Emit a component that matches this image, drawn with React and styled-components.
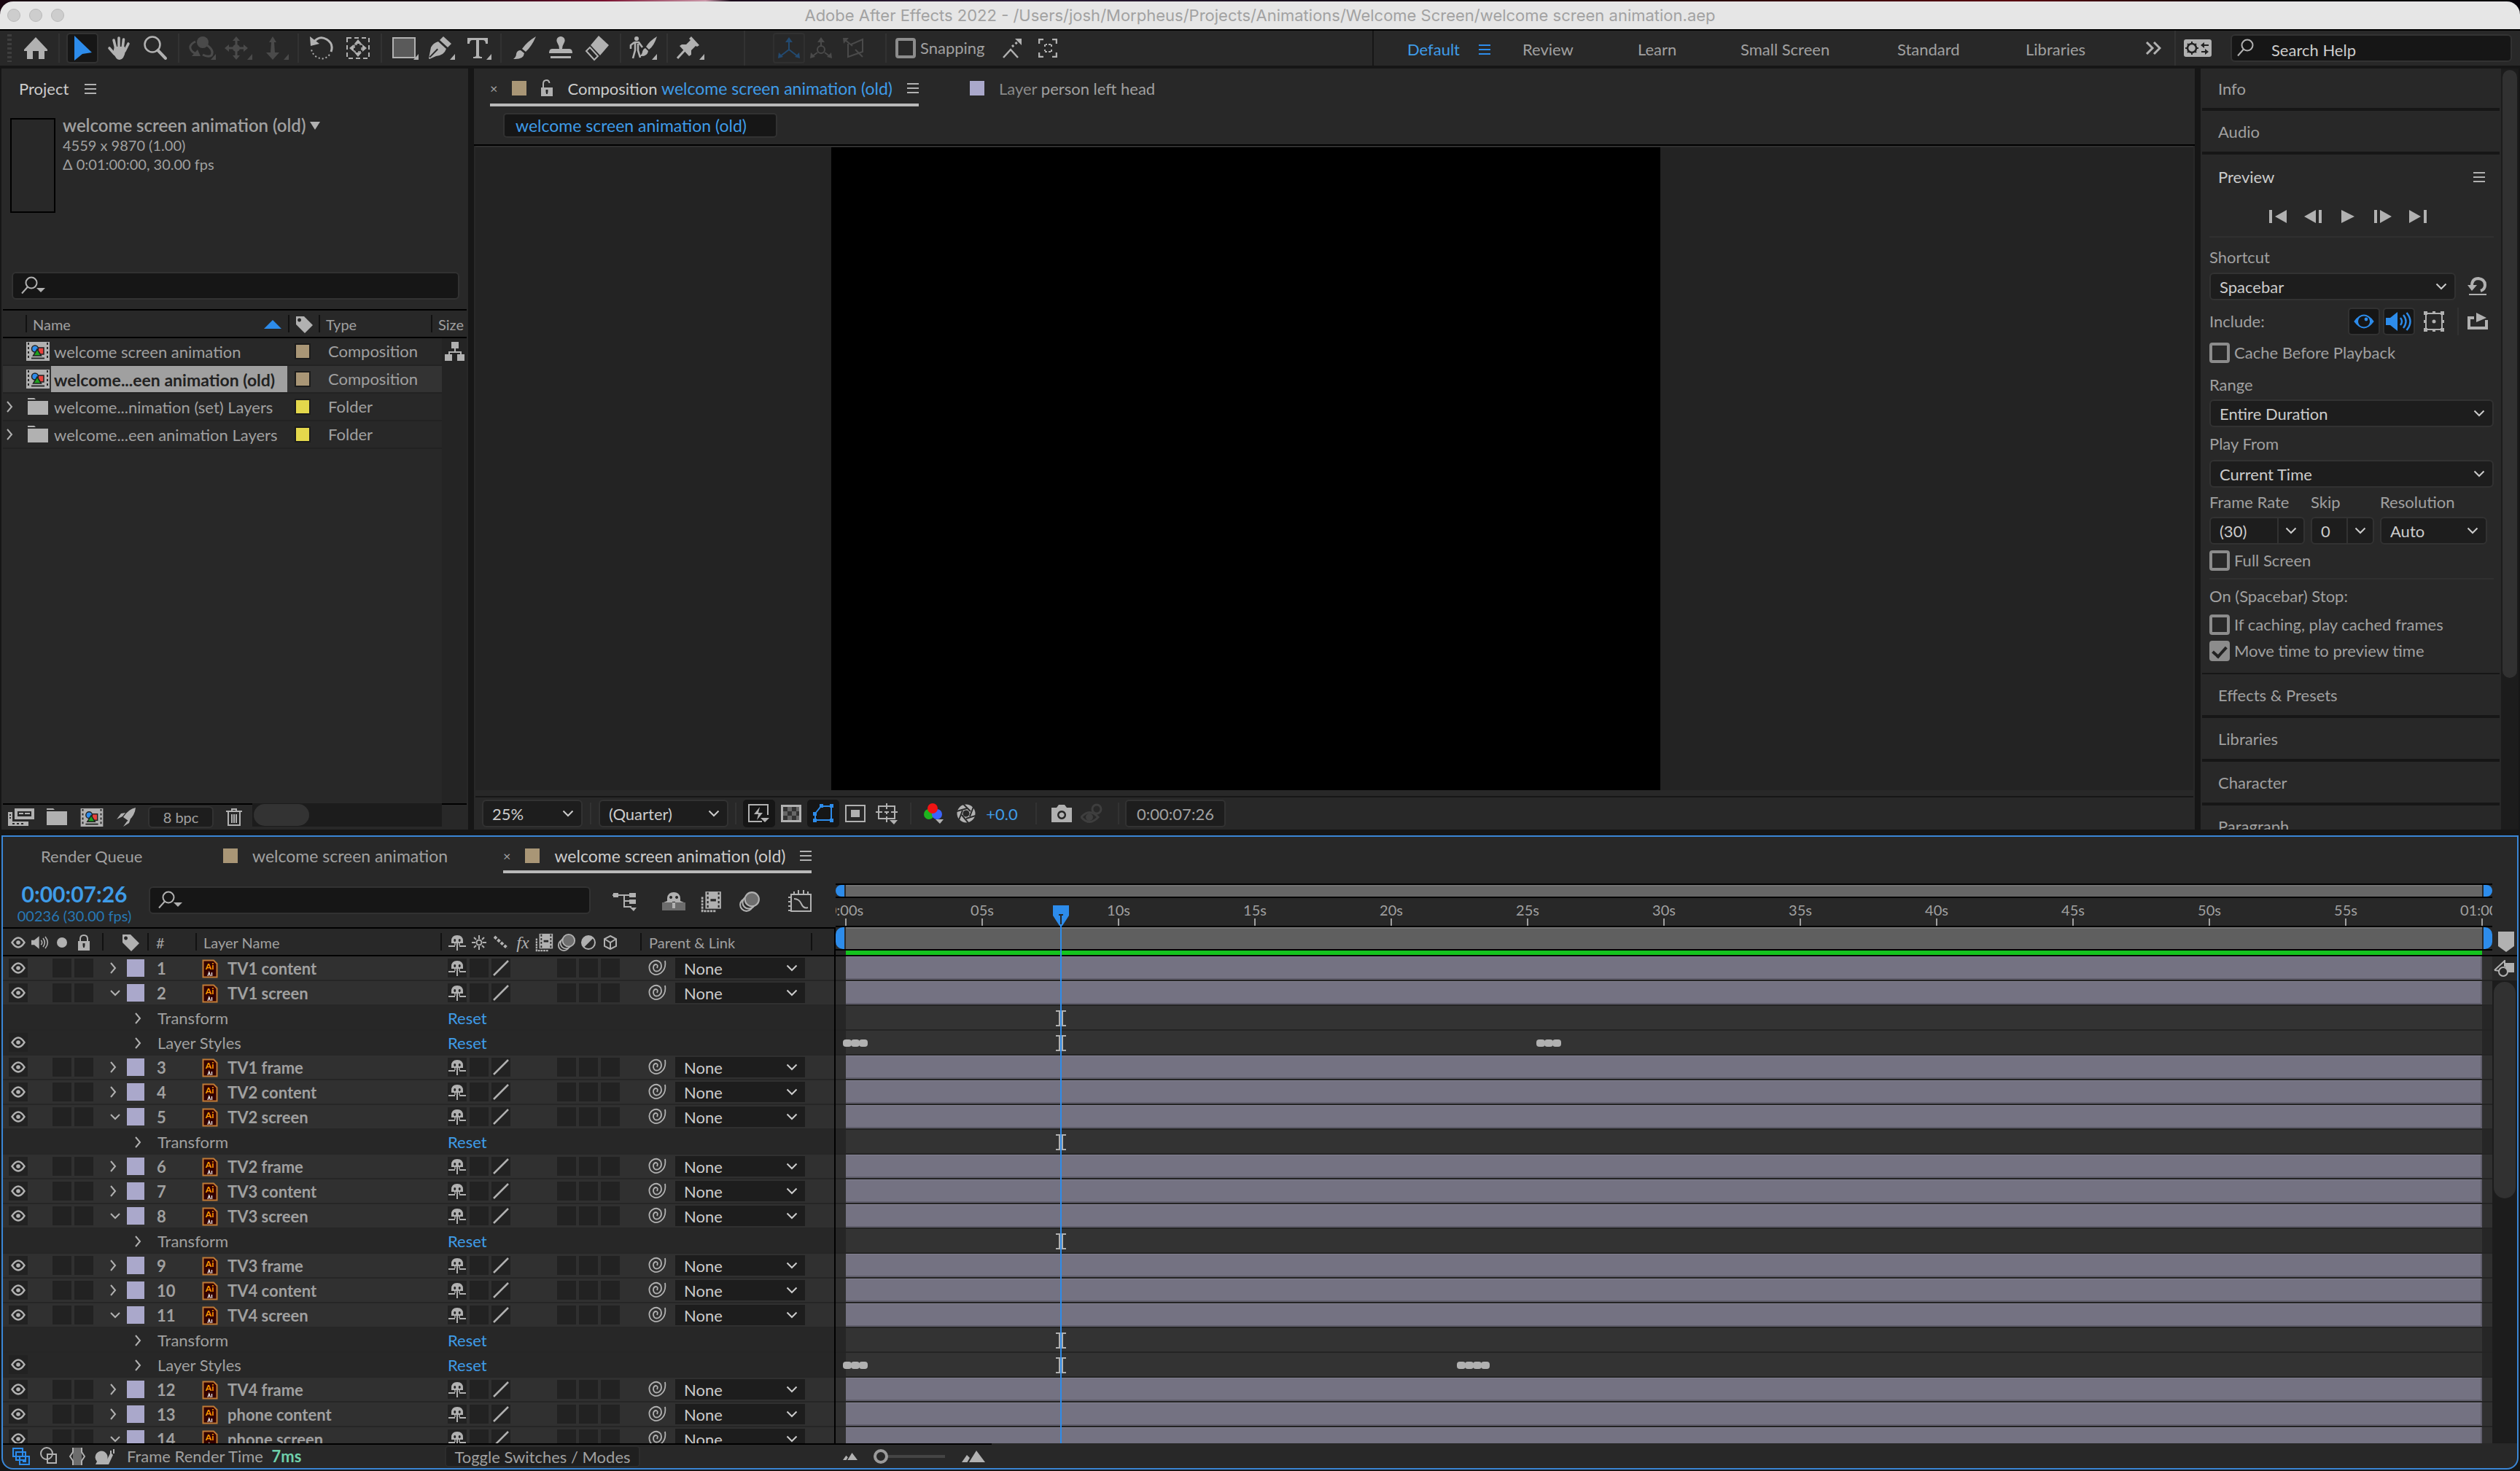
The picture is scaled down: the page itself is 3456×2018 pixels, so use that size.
import React from "react";
import styled, { createGlobalStyle, css } from "styled-components";

const color = {
  gap: "#161616",
  panel: "#282828",
  well: "#161616",
  field: "#1d1d1d",
  edge: "#323232",
  icon: "#b1b1b1",
  text: "#a0a0a0",
  bright: "#cccccc",
  blue: "#2d8ceb",
  link: "#3f9ce8",
  tan: "#a99676",
  lavender: "#aaa8cb",
  yellow: "#e4d84c",
};

const GlobalStyle = createGlobalStyle`
  * { box-sizing: border-box; }
  html, body { margin: 0; background: #000; }
  body, button, input, select { font-family: Lato, "Open Sans", sans-serif; font-size: 22px; color: ${color.text}; }
  button { border: 0; padding: 0; margin: 0; background: none; cursor: pointer; }
  svg { display: block; flex: none; }
`;

/* ---------- shared parts ---------- */

const Page = styled.div`
  height: 100vh;
  display: flex;
  flex-direction: column;
  overflow: hidden;
  background: ${color.gap};
  line-height: 28px;
  white-space: nowrap;
`;

const Burger = styled.span`
  display: block;
  flex: none;
  width: 16px;
  height: 14px;
  border-top: 2px solid ${(p) => p.$color || color.icon};
  border-bottom: 2px solid ${(p) => p.$color || color.icon};
  background: linear-gradient(${(p) => p.$color || color.icon}, ${(p) => p.$color || color.icon}) center / 100% 2px no-repeat;
`;

const Swatch = styled.span`
  display: block;
  flex: none;
  width: ${(p) => p.$size || 20}px;
  height: ${(p) => p.$size || 20}px;
  background: ${(p) => p.$color};
  outline: ${(p) => (p.$ring ? "2px solid #1c1c1c" : "none")};
`;

const SearchBox = styled.label`
  display: flex;
  align-items: center;
  height: 38px;
  padding: 0 10px;
  gap: 14px;
  background: ${color.well};
  border: 2px solid ${color.edge};
  border-radius: 6px;
`;

const SearchInput = styled.input`
  flex: 1;
  min-width: 0;
  height: 34px;
  padding: 4px 0 0;
  border: 0;
  outline: 0;
  background: none;
  color: ${color.bright};
  &::placeholder { color: ${color.bright}; opacity: 1; }
`;

const SelectWrap = styled.span`
  display: grid;
  grid-template-columns: minmax(0, 1fr) 36px;
  align-items: center;
  width: ${(p) => p.$width || "100%"};
  height: ${(p) => p.$height || 38}px;
  background: ${color.field};
  border: ${(p) => (p.$flat ? "0" : `2px solid ${color.edge}`)};
  border-radius: ${(p) => (p.$flat ? 0 : 6)}px;
  overflow: hidden;
`;

const NativeSelect = styled.select`
  grid-area: 1 / 1 / 2 / 3;
  appearance: none;
  width: 100%;
  height: 100%;
  padding: 1px 0 0 12px;
  border: 0;
  outline: 0;
  background: none;
  color: ${color.bright};
`;

const SelectArrow = styled.span`
  grid-area: 1 / 2 / 2 / 3;
  display: flex;
  align-items: center;
  justify-content: center;
  height: 100%;
  pointer-events: none;
  border-left: ${(p) => (p.$split ? `2px solid ${color.edge}` : "0")};
`;

const Check = styled.input`
  appearance: none;
  flex: none;
  display: grid;
  place-items: center;
  width: 28px;
  height: 28px;
  margin: 0;
  border: 4px solid #8c8c8c;
  border-radius: 4px;
  &:checked { background: #8c8c8c; }
  &:checked::after {
    content: "";
    width: 8px;
    height: 15px;
    margin-bottom: 4px;
    border: solid #222;
    border-width: 0 4px 4px 0;
    transform: rotate(42deg);
  }
`;

const CheckLabel = styled.label`
  display: flex;
  align-items: center;
  gap: 6px;
`;

const Chevron = ({ size = 16, stroke = color.icon }) => (
  <svg width={size} height="10" viewBox="0 0 16 10">
    <path d="M1.5 1.5 L8 8 L14.5 1.5" fill="none" stroke={stroke} strokeWidth="2" />
  </svg>
);

const Twirl = ({ open }) => (
  <svg width="18" height="18" viewBox="0 0 18 18">
    <path d={open ? "M4 6 L10 12 L16 6" : "M4 2 L10 9 L4 16"} fill="none" stroke={color.icon} strokeWidth="2" />
  </svg>
);

const Dropdown = ({ label, value, width, height, split, flat }) => (
  <SelectWrap $width={width} $height={height} $flat={flat}>
    <NativeSelect aria-label={label} defaultValue={value}>
      <option>{value}</option>
    </NativeSelect>
    <SelectArrow $split={split}>
      <Chevron stroke={color.bright} />
    </SelectArrow>
  </SelectWrap>
);

const FindIcon = ({ menu }) => (
  <svg width="36" height="26" viewBox="0 0 36 26">
    <g fill="none" stroke={color.icon} strokeWidth="2">
      <circle cx="15" cy="9" r="7.5" />
      <path d="M10 14.5 L2 23.5" />
    </g>
    {menu && <path d="M22 16 h12 l-6 6z" fill={color.icon} />}
  </svg>
);

/* ---------- icon drawings ---------- */

const Draw = ({ w = 32, h = 32, c = color.icon, children }) => (
  <svg width={w} height={h} viewBox={`0 0 ${w} ${h}`} fill={c} stroke="none">
    {children}
  </svg>
);

const stroked = (c = color.icon, width = 2) => ({ fill: "none", stroke: c, strokeWidth: width });

const TagIcon = () => (
  <Draw w={24} h={24}>
    <path fillRule="evenodd" d="M1 1 h11 L24 13 L13 24 L1 12z M5.5 3.5 a2.5 2.5 0 1 0 .1 0z" />
  </Draw>
);

const CompIcon = ({ w = 32, h = 26 }) => (
  <svg width={w} height={h} viewBox="0 0 32 26">
    <rect width="32" height="26" fill={color.icon} />
    <path d="M3 1v24M29 1v24" stroke="#2a2a2a" strokeWidth="2" strokeDasharray="3 3" />
    <path d="M7 22.5h18" stroke="#2a2a2a" strokeWidth="2" />
    <rect x="14" y="8" width="10" height="9" fill="#e8423c" stroke="#222" strokeWidth="1.5" />
    <circle cx="12" cy="9.5" r="4.5" fill="#2d8ceb" stroke="#222" strokeWidth="1.5" />
    <path d="M15 10 L20.5 19 H9.5z" fill="#1ea01e" stroke="#222" strokeWidth="1.5" />
  </svg>
);

const FolderIcon = () => (
  <Draw w={28} h={24}>
    <path d="M0 0h9l2 2H0z M0 4h28v19H0z" />
  </Draw>
);

const EyeIcon = ({ w = 20, h = 16 }) => (
  <svg width={w} height={h} viewBox="0 0 20 16">
    <path d="M1.5 8 Q10 -5 18.5 8 Q10 21 1.5 8z" fill="none" stroke={color.icon} strokeWidth="2.4" />
    <circle cx="10" cy="8" r="2.8" fill={color.icon} />
  </svg>
);

const PreviewEyeIcon = () => (
  <svg width="28" height="20" viewBox="0 0 28 20">
    <path d="M1.5 10 Q14 -7 26.5 10 Q14 27 1.500 10z" fill="none" stroke={color.blue} strokeWidth="2" />
    <path
      fillRule="evenodd"
      fill={color.blue}
      d="M2 10 Q14 -6 26 10 Q14 26 2 10z M14 2 a8 8 0 1 0 .1 0z"
    />
    <circle cx="17" cy="7" r="2.4" fill={color.blue} />
  </svg>
);

const SpeakerIcon = ({ w = 24, h = 22, c = color.icon }) => (
  <svg width={w} height={h} viewBox="0 0 36 26">
    <path d="M0 8 h6 L16 0 v26 L6 18 H0z" fill={c} />
    <path d="M20 8 q4 5 0 10 M24 4 q7 9 0 18 M28.5 1 q10 12 0 24" fill="none" stroke={c} strokeWidth="2.4" />
  </svg>
);

const LockIcon = () => (
  <Draw w={20} h={24}>
    <path d="M5 11 V7 q0-5 5-5 t5 5 v4" {...stroked()} />
    <path fillRule="evenodd" d="M2 10h16v13H2z M8.5 13v3l.7 3h1.6l.7-3v-3z" />
  </Draw>
);

const OpenLockIcon = () => (
  <Draw w={16} h={24}>
    <path d="M3 12 V6 q0-5 4.5-5 Q11 1 11.5 5" {...stroked()} />
    <path fillRule="evenodd" d="M0 11h16v12H0z M6.5 14v3l.7 3h1.6l.7-3v-3z" />
  </Draw>
);

const ShyIcon = ({ w = 24, h = 26 }) => (
  <svg width={w} height={h} viewBox="0 0 24 26">
    <path
      fillRule="evenodd"
      fill={color.icon}
      d="M4 14 V11 Q4 3 12 3 Q20 3 20 11 V14z M8.7 8 a1.5 2 0 1 0 .1 0z M15.2 8 a1.5 2 0 1 0 .1 0z"
    />
    <path d="M0 18h9M15 18h9M12 13v11" stroke={color.icon} strokeWidth="2" />
    <path d="M9 13v4M15 13v4" stroke={color.icon} strokeWidth="1.5" />
  </svg>
);

const FilmIcon = ({ w = 26, h = 26 }) => (
  <svg width={w} height={h} viewBox="0 0 28 28">
    <path d="M2 8 V26 H20" {...stroked(color.icon, 2.5)} strokeDasharray="3 1" />
    <rect x="6" y="1" width="20" height="22" fill={color.icon} />
    <path d="M9 2v20M23 2v20" stroke="#282828" strokeWidth="2" strokeDasharray="3 2.5" />
    <path d="M12.5 12h7" stroke="#282828" strokeWidth="3" />
  </svg>
);

const BlurIcon = ({ w = 26, h = 26 }) => (
  <svg width={w} height={h} viewBox="0 0 28 28">
    <g fill="none" stroke={color.icon} strokeWidth="2">
      <circle cx="10" cy="18" r="8" />
      <circle cx="13" cy="15" r="8" fill="#282828" />
      <circle cx="17" cy="11" r="9" fill="#6e6e6e" />
    </g>
  </svg>
);

const SpiralIcon = () => (
  <Draw w={26} h={24}>
    <path
      d="M24 2 Q26 13 18 19 Q10 24 4 17 Q0 9 6 4 Q13 -1 18 5 Q21 12 15 16 Q9 18 8 12 Q8 7 12 7 Q15 8 13 12"
      {...stroked(color.icon, 1.8)}
    />
  </Draw>
);

const AiIcon = () => (
  <svg width="22" height="26" viewBox="0 0 22 26">
    <path d="M1.5 1.5 H16 L20.5 6 V24.5 H1.5z" fill="#330000" stroke="#c07a35" strokeWidth="2" />
    <text x="10.5" y="14" textAnchor="middle" fontFamily="Lato, sans-serif" fontWeight="700" fontSize="12" fill="#ff9a00">
      Ai
    </text>
    <path d="M8 23 L9.8 18 L11.5 23 M13.5 18v5" stroke="#eee" strokeWidth="1.3" fill="none" />
  </svg>
);

const PeakIcon = ({ w, h }) => (
  <svg width={w} height={h} viewBox="0 0 32 16">
    <path d="M10 16 L20 0 L32 16z M0 16 L7 6 L11 10 L7.5 16z" fill={color.icon} />
  </svg>
);

/* ---------- title bar ---------- */

const Backdrop = styled.div`
  flex: none;
  padding-top: 2px;
  background: linear-gradient(90deg, #180510 0 18%, #7a1230 24%, #c9a 28%, #1c0c1c 29%, #30203c 40%, #0a0408 60%, #5a0810 80%, #05020a 90%);
`;

const TitleBar = styled.header`
  display: grid;
  grid-template-columns: 120px 1fr 120px;
  align-items: center;
  height: 38px;
  padding: 0 10px;
  background: #e6e6e6;
  border-radius: 18px 18px 0 0;
`;

const Lights = styled.div`
  display: flex;
  gap: 12px;
`;

const Light = styled.button`
  width: 18px;
  height: 18px;
  border-radius: 50%;
  background: #cdcdcd;
  border: 1px solid #b9b9b9;
`;

const WindowTitle = styled.h1`
  margin: 0;
  text-align: center;
  font: 400 22px/28px Inter, sans-serif;
  color: #a2a2a2;
`;

/* ---------- toolbar ---------- */

const ToolBar = styled.nav`
  flex: none;
  display: flex;
  align-items: center;
  height: 50px;
  padding: 0 11px 0 10px;
  border-top: 2px solid #000;
  background: ${color.panel};
`;

const Grip = styled.span`
  width: 6px;
  height: 38px;
  margin-right: 8px;
  background: repeating-linear-gradient(#3e3e3e 0 3px, transparent 3px 6px);
`;

const Sep = styled.span`
  flex: none;
  width: 2px;
  height: ${(p) => p.$height || 40}px;
  margin: 0 ${(p) => p.$after || p.$gap || 6}px 0 ${(p) => p.$gap || 6}px;
  background: #323232;
`;

const Tool = styled.button`
  flex: none;
  display: flex;
  align-items: center;
  justify-content: center;
  width: 50px;
  height: 42px;
`;

const ToolFace = styled.span`
  display: flex;
  align-items: center;
  justify-content: center;
  width: 44px;
  height: 42px;
  border-radius: 5px;
  ${(p) => p.$on && css`background: #161616; border: 2px solid ${color.edge};`}
`;

const Axis = styled.button`
  flex: none;
  display: flex;
  align-items: center;
  justify-content: center;
  width: 44px;
  height: 42px;
  border: 2px solid ${(p) => (p.$on ? "#303030" : "transparent")};
  border-radius: 4px;
`;

const Snap = styled.div`
  display: flex;
  align-items: center;
  gap: 22px;
  margin-left: 23px;
`;

const Workspaces = styled.div`
  display: flex;
  align-items: center;
  align-self: stretch;
  margin-left: auto;
  padding-left: 46px;
  border-left: 2px solid #161616;
`;

const Workspace = styled.button`
  color: ${(p) => (p.$on ? color.link : color.text)};
  width: ${(p) => p.$width}px;
  padding-top: 3px;
  text-align: left;
  display: flex;
  align-items: center;
  gap: 26px;
`;

const HelpBox = styled(SearchBox)`
  width: 386px;
  margin-left: 26px;
  padding: 0 6px;
  gap: 12px;
`;

const dim = "#4a4a4a";
const corner = (c = color.icon) => <path d="M38 25 v8 h-7z" fill={c} />;

const toolIcons = {
  home: (
    <Draw w={32} h={30}>
      <path d="M16 0 L32 17 V19 H28 V30 H20 V19 H12 V30 H4 V19 H0 V17z" />
    </Draw>
  ),
  select: (
    <Draw w={26} h={34} c={color.blue}>
      <path d="M2 0 L26 23 L13 25 L2 34z" />
    </Draw>
  ),
  hand: (
    <Draw w={32} h={34}>
      <g fill="none" stroke={color.icon} strokeWidth="3.6" strokeLinecap="round">
        <path d="M9 6 L12 18 M16 3 V18 M22.5 5 L21 18 M29 11 L24 21 M3 17 L10 25" />
      </g>
      <path d="M10 15 H24 L25 21 Q23 33 17 33 Q12 33 8 23z" />
    </Draw>
  ),
  zoom: (
    <Draw w={34} h={34}>
      <circle cx="13" cy="12" r="10.5" {...stroked(color.icon, 2.5)} />
      <path d="M20.5 20 L31 31" {...stroked(color.icon, 4)} strokeLinecap="round" />
    </Draw>
  ),
  orbit: (
    <Draw w={38} h={34} c={dim}>
      <circle cx="20" cy="9" r="8" />
      <path d="M10 8 Q-2 14 6 22 L12 26 M26 13 Q36 20 32 27 Q27 30 20 26" {...stroked(dim, 3)} />
      <path d="M5 28 L13 19 L17 28z" />
      {corner(dim)}
    </Draw>
  ),
  pan: (
    <Draw w={38} h={34} c={dim}>
      <path d="M16 3v28M2 17h28" {...stroked(dim, 3)} />
      <path d="M16 1 l5 6 h-10z M16 33 l5-6 h-10z M0 17 l6-5 v10z M32 17 l-6-5 v10z" />
      <circle cx="16" cy="17" r="5" />
      {corner(dim)}
    </Draw>
  ),
  dolly: (
    <Draw w={38} h={34} c={dim}>
      <path d="M16 1 l5 8 h-3 l1 14 h6 l-9 10 l-9-10 h6 l1-14 h-3z" />
      {corner(dim)}
    </Draw>
  ),
  rotate: (
    <Draw w={34} h={34}>
      <path d="M6 9 Q14 -1 24 5 Q34 11 30 22" {...stroked(color.icon, 3)} />
      <path d="M1 1 L2 14 L14 11z" />
      <path d="M28 26 Q20 35 10 29 Q3 24 3 17" {...stroked()} strokeDasharray="2 3" />
    </Draw>
  ),
  anchor: (
    <Draw w={34} h={34}>
      <rect x="2" y="3" width="30" height="28" {...stroked()} strokeDasharray="6 4" />
      <path d="M12 12 h10 v10 h-10z" {...stroked(color.icon, 1.5)} strokeDasharray="4 3" />
      <path d="M17 5 l5 6 h-10z M17 29 l5-6 h-10z M5 17 l6-5 v10z M29 17 l-6-5 v10z" />
    </Draw>
  ),
  rect: (
    <Draw w={38} h={34}>
      <rect x="3" y="3" width="30" height="27" fill="#5a5a5a" stroke={color.icon} strokeWidth="2" />
      {corner()}
    </Draw>
  ),
  pen: (
    <Draw w={38} h={34}>
      <path d="M22 1 L33 11 L28 16 L17 6z" />
      <path fillRule="evenodd" d="M15 8 L26 18 Q23 27 12 28 L3 32 L2 31 L5 16 Q8 10 15 8z M4 30 L15 19 L13.5 17.5 L2.5 29z" />
      {corner()}
    </Draw>
  ),
  type: (
    <Draw w={38} h={34}>
      <path d="M5 3 H33 V11 H30 Q30 6 26 6 H21 V27 Q21 29 25 29 V31 H13 V29 Q17 29 17 27 V6 H12 Q8 6 8 11 H5z" />
      {corner()}
    </Draw>
  ),
  brush: (
    <Draw w={34} h={34}>
      <path d="M33 1 Q27 15 19 22 L14 18 Q21 8 33 1z M12 20 L17 24 Q16 33 2 32 Q6 29 6 25 Q7 20 12 20z" />
    </Draw>
  ),
  stamp: (
    <Draw w={34} h={34}>
      <path d="M17 1 a5.5 5.5 0 0 1 5 8 Q19 14 19 18 H29 Q33 18 33 24 H1 Q1 18 5 18 H15 Q15 14 12 9 A5.5 5.5 0 0 1 17 1z M3 28h28v3H3z" />
    </Draw>
  ),
  eraser: (
    <Draw w={34} h={36}>
      <path d="M19 1 L33 14 L21 28 L8 14z" />
      <path d="M7 17 L18 29 L13 34 L2 22z" {...stroked()} />
    </Draw>
  ),
  roto: (
    <Draw w={40} h={34}>
      <circle cx="10" cy="4" r="3" />
      <path d="M7 9 L13 9 L18 16 M7 9 L2 13 V18 M8 10 V20 L5 31 M12 11 V20 L15 30" {...stroked(color.icon, 2.6)} />
      <path d="M38 1 Q34 14 27 19 L23 15 Q28 7 38 1z M22 17 L26 21 Q25 29 14 28 Q18 25 18 22 Q19 18 22 17z" />
      <path d="M38 25 v8 h-7z" />
    </Draw>
  ),
  pin: (
    <Draw w={38} h={34}>
      <path d="M20 1 L31 13 L28 15 L26 14 L20 20 L20 26 L17 28 L4 14 L7 12 L13 12 L19 6 L17 4z" />
      <path d="M11 20 L1 31" {...stroked(color.icon, 3)} />
      {corner()}
    </Draw>
  ),
};

const toolGroups = [
  [["Home", "home"]],
  [["Selection", "select"], ["Hand", "hand"], ["Zoom", "zoom"]],
  [["Orbit", "orbit"], ["Pan", "pan"], ["Dolly", "dolly"]],
  [["Rotate", "rotate"], ["Pan Behind", "anchor"]],
  [["Rectangle", "rect"], ["Pen", "pen"], ["Type", "type"]],
  [["Brush", "brush"], ["Clone Stamp", "stamp"], ["Eraser", "eraser"]],
  [["Roto Brush", "roto"]],
  [["Puppet Pin", "pin"]],
];

const workspaces = [
  ["Default", 158],
  ["Review", 158],
  ["Learn", 141],
  ["Small Screen", 215],
  ["Standard", 176],
  ["Libraries", 164],
];

const TopTools = () => (
  <ToolBar>
    <Grip />
    {toolGroups.map((group, i) => (
      <React.Fragment key={i}>
        {i > 0 && <Sep />}
        {group.map(([name, icon]) => (
          <Tool key={name} aria-label={name}>
            <ToolFace $on={icon === "select"}>{toolIcons[icon]}</ToolFace>
          </Tool>
        ))}
      </React.Fragment>
    ))}
    <Sep $gap={48} $after={38} $height={48} />
    <Axis $on aria-label="Local axis">
      <Draw w={32} h={30} c="#234a70">
        <path d="M16 3v14L3 27M16 17l13 10" {...stroked("#234a70")} />
        <path d="M16 0l5 7H11z M1 29l1-8 6 6z M31 29l-1-8-6 6z" />
      </Draw>
    </Axis>
    <Axis aria-label="World axis">
      <Draw w={32} h={30} c={dim}>
        <path d="M16 3v10M11 21L3 27M21 21l8 6" {...stroked(dim)} />
        <circle cx="16" cy="17" r="5" {...stroked(dim)} />
        <path d="M16 0l5 7H11z M1 29l1-8 6 6z M31 29l-1-8-6 6z" />
      </Draw>
    </Axis>
    <Axis aria-label="View axis">
      <Draw w={30} h={30} c={dim}>
        <path d="M3 3l11 9M8 9v18L28 20V3L12 10M18 17l10 10" {...stroked(dim)} />
        <path d="M1 1h8L2 9z" />
      </Draw>
    </Axis>
    <Sep $gap={22} $after={12} />
    <CheckLabel>
      <Check type="checkbox" />
      Snapping
    </CheckLabel>
    <Snap>
      <Draw w={28} h={28}>
        <path d="M2 27 L12 16 L22 27" {...stroked(color.icon, 2.5)} />
        <path d="M14 12 L22 5" {...stroked(color.icon, 3)} strokeDasharray="3 3" />
        <path d="M18 1h9v9z" />
      </Draw>
      <Draw w={26} h={26}>
        <path d="M1 7V1h6M19 1h6v6M25 19v6h-6M7 25H1v-6" {...stroked(color.icon, 2.5)} />
        <path d="M9 11V8h3M14 8h4v3M18 15v3h-4M12 18H9v-3" {...stroked()} strokeDasharray="3 1" />
      </Draw>
    </Snap>
    <Workspaces>
      {workspaces.map(([name, width], i) => (
        <Workspace key={name} $on={i === 0} $width={width}>
          {name}
          {i === 0 && <Burger $color={color.blue} />}
        </Workspace>
      ))}
      <Draw w={22} h={18}>
        <path d="M2 1l8 8-8 8M12 1l8 8-8 8" {...stroked(color.icon, 3)} />
      </Draw>
      <Sep $height={48} $gap={18} $after={11} />
      <Draw w={38} h={24}>
        <rect width="38" height="24" rx="3" />
        <circle cx="11" cy="12" r="6" fill="none" stroke="#222" strokeWidth="2.5" />
        <path d="M11 3v18M2 12h18M5 6l12 12M17 6L5 18" stroke="#222" strokeWidth="2" strokeDasharray="3 12" />
        <path d="M23 8l5-4v3h6v2h-6v3zM34 17l-5-4v3h-5v2h5v3z" fill="#222" />
      </Draw>
      <HelpBox>
        <FindIcon />
        <SearchInput type="search" placeholder="Search Help" aria-label="Search Help" />
      </HelpBox>
    </Workspaces>
  </ToolBar>
);

/* ---------- upper panels ---------- */

const Upper = styled.main`
  flex: 1044 1 0;
  min-height: 0;
  display: grid;
  grid-template-columns: 640px minmax(0, 1fr) 436px;
  grid-template-rows: minmax(0, 1fr);
  gap: 8px;
  margin: 4px 2px 8px;
`;

const Panel = styled.section`
  display: flex;
  flex-direction: column;
  min-width: 0;
  min-height: 0;
  overflow: hidden;
  background: ${color.panel};
`;

const PanelHead = styled.div`
  flex: none;
  display: flex;
  align-items: center;
  gap: 22px;
  height: 56px;
  padding: 0 24px;
  color: ${color.bright};
`;

const Info = styled.div`
  flex: none;
  display: flex;
  gap: 10px;
  height: 223px;
  padding: 8px 12px 0;
`;

const Thumb = styled.div`
  width: 62px;
  height: 130px;
  margin-top: 4px;
  border: 2px solid #000;
`;

const InfoText = styled.div`
  font-size: 20px;
  line-height: 26px;
`;

const InfoName = styled.h2`
  display: flex;
  align-items: center;
  gap: 6px;
  margin: 0;
  font-size: 24px;
  line-height: 28px;
  font-weight: 600;
`;

const ProjectSearch = styled(SearchBox)`
  flex: none;
  margin: 0 12px 13px 14px;
`;

const ProjectTable = styled.table`
  display: flex;
  flex-direction: column;
  flex: 1;
  min-height: 0;
  margin: 0 2px;
  thead, tbody { display: block; }
  tbody { flex: 1; background: linear-gradient(90deg, transparent calc(100% - 34px), #242424 0); }
`;

const HeadRow = styled.tr`
  display: flex;
  align-items: center;
  height: 40px;
  border-top: 2px solid #000;
  border-bottom: 2px solid #000;
  font-size: 20px;
`;

const HeadCell = styled.th`
  flex: ${(p) => (p.$grow ? "1" : "none")};
  width: ${(p) => p.$width}px;
  height: 24px;
  display: flex;
  align-items: center;
  justify-content: ${(p) => p.$justify || "flex-start"};
  gap: ${(p) => p.$gap || 0}px;
  padding: 1px 0 0 ${(p) => p.$pad || 0}px;
  font-weight: 400;
  border-right: ${(p) => (p.$last ? "0" : "2px solid #111")};
`;

const ItemRow = styled.tr`
  display: flex;
  align-items: center;
  height: 38px;
  margin-right: 34px;
  border-bottom: 2px solid #222;
  background: ${(p) => (p.$on ? "#333" : "transparent")};
`;

const ItemCell = styled.td`
  flex: none;
  width: ${(p) => p.$width}px;
  height: 36px;
  display: flex;
  align-items: center;
  padding: 0 0 0 ${(p) => p.$pad || 0}px;
  line-height: 38px;
`;

const ItemName = styled.span`
  flex: 1;
  height: 36px;
  padding-left: 4px;
  margin-left: 2px;
  margin-right: 2px;
  ${(p) => p.$on && css`background: #a0a0a0; color: #222; font-weight: 700; font-size: 23px;`}
`;

const FlowMark = styled.td`
  display: flex;
  width: 34px;
  margin-right: -34px;
  padding: 0 0 0 4px;
`;

const ProjectFoot = styled.div`
  flex: none;
  display: flex;
  height: 36px;
  padding: 0 2px;
`;

const FootTools = styled.div`
  display: flex;
  align-items: center;
  gap: 17px;
  width: 342px;
  padding-left: 7px;
  border-top: 2px solid #000;
`;

const Depth = styled.button`
  width: 90px;
  height: 30px;
  border: 2px solid ${color.edge};
  border-radius: 6px;
  background: ${color.field};
  font-size: 20px;
`;

const HScroll = styled.div`
  flex: 1;
  height: 32px;
  padding: 1px 2px;
  background: #1c1c1c;
`;

const HThumb = styled.div`
  width: 76px;
  height: 30px;
  border-radius: 15px;
  background: #333;
`;

const FootEnd = styled.div`
  width: 34px;
  border-top: 2px solid #000;
`;

const items = [
  ["welcome screen animation", "Composition"],
  ["welcome...een animation (old)", "Composition"],
  ["welcome...nimation (set) Layers", "Folder"],
  ["welcome...een animation Layers", "Folder"],
];

const ProjectPanel = () => (
  <Panel>
    <PanelHead>
      <span>Project</span>
      <Burger />
    </PanelHead>
    <Info>
      <Thumb />
      <InfoText>
        <InfoName>
          welcome screen animation (old)
          <Draw w={14} h={11}>
            <path d="M0 0h14L7 11z" />
          </Draw>
        </InfoName>
        <div>4559 x 9870 (1.00)</div>
        <div>Δ 0:01:00:00, 30.00 fps</div>
      </InfoText>
    </Info>
    <ProjectSearch>
      <FindIcon menu />
      <SearchInput aria-label="Search project" />
    </ProjectSearch>
    <ProjectTable>
      <thead>
        <HeadRow>
          <HeadCell $width={33} />
          <HeadCell $width={360} $pad={8} $gap={265}>
            Name
            <Draw w={24} h={12} c={color.blue}>
              <path d="M12 0L24 12H0z" />
            </Draw>
          </HeadCell>
          <HeadCell $width={42} $justify="center"><TagIcon /></HeadCell>
          <HeadCell $width={154} $pad={8}>Type</HeadCell>
          <HeadCell $grow $pad={8} $last>Size</HeadCell>
        </HeadRow>
      </thead>
      <tbody>
        {items.map(([name, type], i) => {
          const on = i === 1;
          const folder = type === "Folder";
          return (
            <ItemRow key={name} $on={on}>
              <ItemCell $width={32} $pad={2}>{folder && <Twirl />}</ItemCell>
              <ItemCell $width={360}>
                {folder ? <Draw w={32} h={24}><path d="M2 0h9l2 2H2z M2 4h28v19H2z" /></Draw> : <CompIcon />}
                <ItemName $on={on}>{name}</ItemName>
              </ItemCell>
              <ItemCell $width={54} $pad={10}>
                <Swatch $size={18} $ring $color={folder ? color.yellow : color.tan} />
              </ItemCell>
              <ItemCell $width={156}>{type}</ItemCell>
              {i === 0 && (
                <FlowMark>
                  <Draw w={28} h={26}>
                    <path d="M9 0h10v9H9z M0 17h10v9H0z M17 17h10v9H17z M13 9h2v4h8v4h-2v-2H7v2H5v-4h8z" />
                  </Draw>
                </FlowMark>
              )}
            </ItemRow>
          );
        })}
      </tbody>
    </ProjectTable>
    <ProjectFoot>
      <FootTools>
        <Draw w={36} h={24}>
          <path fillRule="evenodd" d="M9 0h27v15H9z M13 4v7h19V4z M15 6h6v2h-6z M23 6h7v2h-7z M0 5h6v13h22v6H0z M2 8h2v2H2z M2 12h2v2H2z M6 20h3v2H6z M12 20h3v2h-3z M18 20h3v2h-3z" />
        </Draw>
        <FolderIcon />
        <CompIcon w={34} h={25} />
        <Draw w={26} h={26}>
          <path d="M26 0 Q25 11 16 18 L9 13 Q16 2 26 0z M8 12 L12 7 L6 8 L0 16z M14 19 L19 15 L17 21 L9 26z M3 25l6-7" />
        </Draw>
        <Depth>8 bpc</Depth>
        <Draw w={22} h={24}>
          <path d="M3 5v18h16V5M0 4h22M8 3V1h6v2M8 8v12M11 8v12M14 8v12" {...stroked()} />
        </Draw>
      </FootTools>
      <HScroll><HThumb /></HScroll>
      <FootEnd />
    </ProjectFoot>
  </Panel>
);

/* ---------- composition viewer ---------- */

const TabStrip = styled.div`
  flex: none;
  display: flex;
  height: ${(p) => p.$height}px;
  padding-left: ${(p) => p.$pad}px;
  gap: ${(p) => p.$gap}px;
`;

const Tab = styled.button`
  display: flex;
  align-items: center;
  gap: 20px;
  width: ${(p) => (p.$width ? `${p.$width}px` : "auto")};
  height: 100%;
  padding-top: 6px;
  border-bottom: 4px solid ${(p) => (p.$on ? "#b9b9b9" : "transparent")};
  color: ${(p) => (p.$on ? color.bright : color.text)};
`;

const Close = styled.span`
  font-size: 18px;
  color: ${color.text};
`;

const Accent = styled.span`
  color: ${(p) => p.$color};
`;

const CompName = styled.span`
  font-size: 23px;
  color: ${(p) => p.$color || "inherit"};
`;

const Crumbs = styled.div`
  flex: none;
  display: flex;
  align-items: center;
  height: 54px;
  padding: 0 2px 0 40px;
  border-bottom: 2px solid #000;
`;

const Crumb = styled.button`
  width: 376px;
  height: 34px;
  padding-left: 15px;
  text-align: left;
  background: ${color.well};
  border: 2px solid ${color.edge};
  border-radius: 5px;
`;

const Viewer = styled.div`
  flex: 1;
  display: grid;
  grid-template-columns: 488fr 1138fr 732fr;
  margin: 0 2px;
  background: #232323;
  border-top: 2px solid #303030;
`;

const Canvas = styled.div`
  grid-column: 2;
  background: #000;
`;

const ViewerFoot = styled.div`
  flex: none;
  display: flex;
  align-items: center;
  height: 46px;
  margin: 8px 2px 0;
  padding: 0 9px;
  border-top: 2px solid #161616;
`;

const ViewTool = styled.button`
  display: flex;
  align-items: center;
  justify-content: center;
  width: ${(p) => p.$width || 44}px;
  height: 38px;
  border-radius: 5px;
  background: ${(p) => (p.$on ? "#161616" : "none")};
  color: ${(p) => p.$color || color.text};
`;

const TimeField = styled.button`
  width: 138px;
  height: 38px;
  border: 2px solid ${color.edge};
  border-radius: 5px;
  background: ${color.field};
`;

const CompPanel = () => (
  <Panel>
    <TabStrip $height={52} $pad={22} $gap={70}>
      <Tab $on>
        <Close>×</Close>
        <Swatch $color={color.tan} />
        <OpenLockIcon />
        <span>
          Composition <CompName $color={color.link}>welcome screen animation (old)</CompName>
        </span>
        <Burger />
      </Tab>
      <Tab>
        <Swatch $color={color.lavender} />
        <span>
          <Accent $color="#8a8a8a">Layer</Accent> person left head
        </span>
      </Tab>
    </TabStrip>
    <Crumbs>
      <Crumb>
        <CompName $color={color.link}>welcome screen animation (old)</CompName>
      </Crumb>
    </Crumbs>
    <Viewer>
      <Canvas />
    </Viewer>
    <ViewerFoot>
      <Dropdown label="Magnification" value="25%" width="138px" />
      <Sep $gap={10} $height={30} />
      <Dropdown label="Resolution" value="(Quarter)" width="178px" />
      <Sep $gap={9} $height={30} />
      <ViewTool $on aria-label="Fast previews">
        <Draw w={32} h={26}>
          <path d="M20 24H2V1h26v14" {...stroked()} />
          <path d="M17 4l-8 10h6l-2 8 8-10h-6z M18 19h12l-6 6z" />
        </Draw>
      </ViewTool>
      <ViewTool aria-label="Transparency grid">
        <Draw w={28} h={24}>
          <rect width="28" height="24" />
          <path d="M3 3h6v6H3zM15 3h6v6h-6zM9 9h6v6H9zM21 9h4v6h-4zM3 15h6v6H3zM15 15h6v6h-6z" fill="#333" />
          <path d="M9 3h6v6H9zM21 3h4v6h-4zM3 9h6v6H3zM15 9h6v6h-6zM9 15h6v6H9zM21 15h4v6h-4z" fill="#666" />
        </Draw>
      </ViewTool>
      <ViewTool $on aria-label="Mask visibility">
        <Draw w={30} h={26} c={color.blue}>
          <path d="M4 22V13L12 3h14v19z" {...stroked(color.blue)} />
          <path d="M10 0h5v5h-5zM24 0h5v5h-5zM24 20h5v5h-5zM1 20h5v5H1zM1 11h5v5H1z" />
        </Draw>
      </ViewTool>
      <ViewTool aria-label="Region of interest">
        <Draw w={28} h={24}>
          <rect x="1" y="1" width="26" height="22" {...stroked()} />
          <path d="M8 7h12v10H8z" />
        </Draw>
      </ViewTool>
      <ViewTool aria-label="Grid and guides">
        <Draw w={32} h={30}>
          <path d="M4 5h22v17H4zM15 1v8M15 12v4M15 19v8M0 13h9M12 13h6M21 13h9" {...stroked()} />
          <path d="M19 24h11l-5 6z" />
        </Draw>
      </ViewTool>
      <Sep $gap={9} $height={30} />
      <ViewTool aria-label="Channels">
        <Draw w={28} h={28}>
          <circle cx="7" cy="15" r="7" fill="#1eb41e" />
          <circle cx="18" cy="15" r="7" fill="#3c64ff" />
          <circle cx="12" cy="7" r="7" fill="#f01414" />
          <path d="M16 22h11l-5 6z" />
        </Draw>
      </ViewTool>
      <ViewTool aria-label="Reset exposure">
        <Draw w={26} h={26}>
          <circle cx="13" cy="13" r="8.5" {...stroked(color.icon, 8)} />
          <path d="M9 0L19 10M23 4L18 17M26 16L13 20M16 26L7 15M3 22L8 9M0 10L14 6" {...stroked(color.panel, 2)} />
        </Draw>
      </ViewTool>
      <ViewTool $width={54} $color={color.link}>+0.0</ViewTool>
      <Sep $gap={19} $height={30} />
      <ViewTool $width={30} aria-label="Snapshot">
        <Draw w={28} h={24}>
          <path fillRule="evenodd" d="M0 4h7l3-4h8l3 4h7v20H0z M14 8a6 6 0 1 0 .1 0z M14 10.5a3.5 3.5 0 1 0 .1 0z" />
        </Draw>
      </ViewTool>
      <ViewTool $width={54} aria-label="Show snapshot">
        <Draw w={32} h={28} c="#3e3e3e">
          <circle cx="22" cy="8" r="6" {...stroked("#3e3e3e", 3)} />
          <path d="M1 19Q12 6 24 19Q12 32 1 19z" {...stroked("#3e3e3e", 3)} />
          <circle cx="12" cy="19" r="5" />
        </Draw>
      </ViewTool>
      <Sep $gap={8} $height={30} />
      <TimeField>0:00:07:26</TimeField>
    </ViewerFoot>
  </Panel>
);

/* ---------- right column ---------- */

const SideColumn = styled.aside`
  display: flex;
  min-height: 0;
  background: ${color.panel};
  overflow: hidden;
`;

const SideStack = styled.div`
  flex: 1;
  min-width: 0;
  padding: 0 2px;
`;

const SideHead = styled.h3`
  display: flex;
  align-items: center;
  justify-content: space-between;
  height: ${(p) => p.$height || 60}px;
  margin: 0;
  padding: 2px 20px 0 22px;
  font-size: 22px;
  font-weight: 400;
  color: ${(p) => (p.$on ? color.bright : color.text)};
  border-bottom: ${(p) => (p.$on ? "0" : "4px solid #161616")};
`;

const SideScroll = styled.div`
  width: 24px;
  padding: 2px 2px 0;
  background: #1c1c1c;
`;

const SideThumb = styled.div`
  height: 80%;
  border-radius: 10px;
  background: #313131;
`;

const Transport = styled.div`
  display: flex;
  align-items: flex-start;
  justify-content: center;
  gap: 24px;
  height: 54px;
  margin: 0 8px 0 10px;
  padding: 16px 10px 0 0;
  border-bottom: 2px solid #303030;
`;

const Preview = styled.div`
  padding: 0 8px 12px 10px;
  border-bottom: 2px solid #161616;
`;

const Caption = styled.div`
  display: flex;
  align-items: center;
  height: ${(p) => p.$height || 44}px;
  padding-top: ${(p) => p.$top || 0}px;
`;

const Line = styled.div`
  display: flex;
  align-items: center;
  gap: ${(p) => p.$gap || 0}px;
  height: ${(p) => p.$height || 38}px;
`;

const IncludeTools = styled.div`
  display: flex;
  align-items: center;
  gap: 4px;
  margin-left: auto;
  padding-right: 8px;
`;

const IncludeButton = styled.button`
  display: flex;
  align-items: center;
  justify-content: center;
  width: 44px;
  height: 38px;
  border: 2px solid ${(p) => (p.$on ? color.edge : "transparent")};
  border-radius: 5px;
  background: ${(p) => (p.$on ? "#161616" : "none")};
`;

const Fields = styled.div`
  display: grid;
  grid-template-columns: 131px 87px 147px;
  gap: 8px;
`;

const Field = styled.label`
  display: flex;
  flex-direction: column;
`;

const Rule = styled.div`
  height: 2px;
  margin-top: 2px;
  background: #303030;
`;

const transport = [
  ["First frame", "M0 0h4v18H0z M24 0v18L8 9z"],
  ["Previous frame", "M16 0v18L0 9z M20 0h4v18h-4z"],
  ["Play", "M3 0v18L21 9z"],
  ["Next frame", "M0 0h4v18H0z M8 0v18l16-9z"],
  ["Last frame", "M0 0v18l16-9z M20 0h4v18h-4z"],
];

const RightColumn = () => (
  <SideColumn>
    <SideStack>
      <SideHead $height={58}>Info</SideHead>
      <SideHead>Audio</SideHead>
      <SideHead $on>
        Preview
        <Burger />
      </SideHead>
      <Transport>
        {transport.map(([name, d]) => (
          <button key={name} aria-label={name}>
            <Draw w={24} h={18}><path d={d} /></Draw>
          </button>
        ))}
      </Transport>
      <Preview>
        <Caption $height={48} $top={6}>Shortcut</Caption>
        <Line $gap={16}>
          <Dropdown label="Shortcut" value="Spacebar" width="338px" />
          <Draw w={26} h={26}>
            <path d="M6 12Q6 2 15 2Q24 3 24 11Q24 17 18 19" {...stroked(color.icon, 4)} />
            <path d="M0 11h13l-7 8z M2 23h24v2H2z" />
          </Draw>
        </Line>
        <Line $height={58}>
          Include:
          <IncludeTools>
            <IncludeButton $on aria-label="Video"><PreviewEyeIcon /></IncludeButton>
            <IncludeButton $on aria-label="Audio"><SpeakerIcon w={36} h={26} c={color.blue} /></IncludeButton>
            <IncludeButton aria-label="Overlays">
              <Draw w={28} h={28}>
                <path d="M3 3h22v22H3z" {...stroked()} />
                <path d="M0 0h5v5H0zM23 0h5v5h-5zM0 23h5v5H0zM23 23h5v5h-5zM12 0h4v4h-4zM12 24h4v4h-4zM0 12h4v4H0zM24 12h4v4h-4z" />
                <circle cx="14" cy="14" r="2.5" />
              </Draw>
            </IncludeButton>
            <Sep $gap={6} $after={8} $height={38} />
            <Draw w={28} h={24}>
              <path d="M9 7H2v14h24V10" {...stroked(color.icon, 4)} />
              <path d="M12 0l14 7-14 6z" />
            </Draw>
          </IncludeTools>
        </Line>
        <CheckLabel><Check type="checkbox" />Cache Before Playback</CheckLabel>
        <Caption $height={50} $top={10}>Range</Caption>
        <Dropdown label="Range" value="Entire Duration" />
        <Caption $height={45}>Play From</Caption>
        <Dropdown label="Play From" value="Current Time" />
        <Fields>
          <Field><Caption $height={40}>Frame Rate</Caption><Dropdown label="Frame Rate" value="(30)" split /></Field>
          <Field><Caption $height={40}>Skip</Caption><Dropdown label="Skip" value="0" split /></Field>
          <Field><Caption $height={40}>Resolution</Caption><Dropdown label="Preview Resolution" value="Auto" /></Field>
        </Fields>
        <Line $height={44}><CheckLabel><Check type="checkbox" />Full Screen</CheckLabel></Line>
        <Rule />
        <Caption $height={44} $top={2}>On (Spacebar) Stop:</Caption>
        <Line $height={36}><CheckLabel><Check type="checkbox" />If caching, play cached frames</CheckLabel></Line>
        <Line $height={36}><CheckLabel><Check type="checkbox" defaultChecked />Move time to preview time</CheckLabel></Line>
      </Preview>
      <SideHead>Effects &amp; Presets</SideHead>
      <SideHead>Libraries</SideHead>
      <SideHead>Character</SideHead>
      <SideHead>Paragraph</SideHead>
    </SideStack>
    <SideScroll><SideThumb /></SideScroll>
  </SideColumn>
);

/* ---------- timeline ---------- */

const TimelinePanel = styled.section`
  flex: 866 1 0;
  min-height: 0;
  display: flex;
  flex-direction: column;
  margin: 0 2px 2px;
  overflow: hidden;
  background: ${color.panel};
  border: 2px solid #3a86d6;
  border-radius: 0 0 16px 16px;
`;

const TimelineBody = styled.div`
  flex: 1;
  min-height: 0;
  display: flex;
`;

const LayerPane = styled.div`
  flex: none;
  width: 1142px;
  display: flex;
  flex-direction: column;
  overflow: hidden;
`;

const LayerTools = styled.div`
  flex: none;
  display: flex;
  height: 74px;
`;

const Clock = styled.div`
  width: 200px;
  padding: 13px 4px 0 0;
  text-align: center;
`;

const ClockTime = styled.div`
  font-size: 30px;
  line-height: 31px;
  font-weight: 700;
  color: ${color.link};
`;

const ClockFrames = styled.div`
  font-size: 20px;
  line-height: 28px;
  color: #2778b5;
`;

const LayerSearch = styled(SearchBox)`
  width: 606px;
  margin-top: 18px;
`;

const LayerToolIcons = styled.div`
  display: flex;
  align-items: center;
  margin-left: 6px;
  padding-top: 4px;
`;

const LayerTool = styled.button`
  display: flex;
  align-items: center;
  justify-content: center;
  width: ${(p) => p.$width || 52}px;
  height: 40px;
`;

const LayerTable = styled.table`
  flex: 1;
  min-height: 0;
  display: block;
  overflow: hidden;
  border-right: 2px solid #000;
  thead, tbody { display: block; }
`;

const Row = styled.tr`
  display: flex;
  height: 34px;
  border-bottom: 2px solid #262626;
  background: ${(p) => (p.$layer ? "#303030" : "#272727")};
`;

const Cell = styled.td`
  flex: none;
  display: flex;
  align-items: center;
  width: ${(p) => p.$width}px;
  gap: ${(p) => p.$gap || 0}px;
  padding: ${(p) => (p.$text ? 2 : 0)}px 0 0 ${(p) => p.$pad || 0}px;
  font-weight: ${(p) => (p.$bold ? 700 : 400)};
`;

const Slot = styled.span`
  flex: none;
  display: flex;
  align-items: center;
  justify-content: center;
  width: 26px;
  height: 26px;
  background: ${(p) => (p.$empty ? "none" : "#222")};
`;

const Reset = styled.button`
  color: ${color.link};
`;

const Fx = styled.span`
  font: italic 24px/24px "Liberation Serif", serif;
  color: ${color.icon};
`;

const TimePane = styled.div`
  flex: 1;
  min-width: 0;
  display: flex;
  flex-direction: column;
  padding-top: 14px;
`;

const Navigator = styled.div`
  flex: none;
  display: flex;
  height: ${(p) => p.$height}px;
  border-top: 2px solid #000;
  border-bottom: 2px solid #000;
`;

const Handle = styled.span`
  width: 12px;
  background: ${color.blue};
  border-radius: ${(p) => (p.$end ? "0 10px 10px 0" : "10px 0 0 10px")};
`;

const Span = styled.span`
  flex: 1;
  margin: 0 2px;
  background: ${(p) => p.$color};
  border-top: 2px solid #727272;
`;

const TimeArea = styled.div`
  position: relative;
  flex: 1;
  min-height: 0;
  display: flex;
  flex-direction: column;
`;

const Ruler = styled.div`
  flex: none;
  display: flex;
  justify-content: space-between;
  height: 38px;
  padding: 0 14px;
  overflow: hidden;
  font-size: 20px;
  line-height: 24px;
`;

const Tick = styled.span`
  display: flex;
  flex-direction: column;
  align-items: center;
  justify-content: flex-end;
  width: 0;
  &::after {
    content: "";
    width: 2px;
    height: 10px;
    background: ${color.text};
  }
`;

const Cached = styled.div`
  flex: none;
  height: 8px;
  padding: 0 14px;
  border-bottom: 2px solid #000;
  &::before {
    content: "";
    display: block;
    height: 6px;
    background: #14c31e;
  }
`;

const Tracks = styled.div`
  flex: 1;
  min-height: 0;
  overflow: hidden;
`;

const Track = styled.div`
  height: 34px;
  padding: 0 14px;
  border-bottom: 2px solid #242424;
  background: ${(p) => (p.$layer ? "#303030" : "#262626")};
`;

const LayerBar = styled.div`
  height: 32px;
  background: #747282;
  border-top: 1px solid #828090;
  border-right: 2px solid #605e6c;
  border-bottom: 2px solid #605e6c;
`;

const PropertyBar = styled.div`
  position: relative;
  height: 32px;
  background: #333;
`;

const Keys = styled.span`
  position: absolute;
  top: 12px;
  display: flex;
  margin-left: -4px;
`;

const Key = styled.i`
  width: 12px;
  height: 10px;
  margin-right: -1px;
  border-radius: 4px;
  background: ${color.icon};
`;

const PLAYHEAD = 13.11;

const Beam = styled.span`
  position: absolute;
  left: ${PLAYHEAD}%;
  top: 6px;
  width: 14px;
  height: 22px;
  margin-left: -6px;
  border-top: 2px solid ${color.icon};
  border-bottom: 2px solid ${color.icon};
  background: linear-gradient(${color.icon}, ${color.icon}) center / 6px 100% no-repeat;
`;

const Playhead = styled.div`
  position: absolute;
  top: 10px;
  bottom: 0;
  left: calc(14px + (100% - 28px) * ${PLAYHEAD / 100});
  width: 22px;
  margin-left: -10px;
  display: flex;
  flex-direction: column;
  align-items: center;
  &::after {
    content: "";
    flex: 1;
    width: 2px;
    background: ${color.blue};
  }
`;

const MarkerPane = styled.div`
  flex: none;
  width: 34px;
  display: flex;
  flex-direction: column;
`;

const MarkerTop = styled.div`
  flex: none;
  display: flex;
  align-items: flex-end;
  justify-content: flex-end;
  height: ${(p) => p.$height}px;
  padding: 0 4px 4px 0;
  border-bottom: ${(p) => (p.$line ? "2px solid #000" : "0")};
`;

const VScroll = styled.div`
  flex: 1;
  padding: 2px;
  background: #1c1c1c;
`;

const VThumb = styled.div`
  height: 47%;
  border-radius: 15px;
  background: #313131;
`;

const TimelineFoot = styled.footer`
  flex: none;
  display: flex;
  align-items: center;
  width: 1356px;
  height: 34px;
  padding-left: 8px;
  border-top: 2px solid #000;
`;

const FootIcons = styled.div`
  display: flex;
  align-items: center;
  gap: 10px;
  width: 162px;
`;

const RenderTime = styled.span`
  width: 436px;
`;

const Good = styled.b`
  margin-left: 6px;
  color: #6fd0aa;
`;

const ToggleButton = styled.button`
  width: 268px;
  height: 30px;
  background: #1f1f1f;
  border: 2px solid #2c2c2c;
  border-radius: 5px;
`;

const ZoomControl = styled.label`
  display: flex;
  align-items: center;
  gap: 22px;
  margin-left: 278px;
`;

const ZoomRange = styled.input`
  appearance: none;
  width: 98px;
  height: 4px;
  margin: 0;
  background: #444;
  &::-webkit-slider-thumb {
    appearance: none;
    width: 20px;
    height: 20px;
    border: 4px solid #9a9a9a;
    border-radius: 50%;
    background: ${color.panel};
  }
`;

const layers = [
  { name: "TV1 content" },
  { name: "TV1 screen", props: ["Transform", "Layer Styles"], keys: [[0, 3], [42.4, 3]] },
  { name: "TV1 frame" },
  { name: "TV2 content" },
  { name: "TV2 screen", props: ["Transform"] },
  { name: "TV2 frame" },
  { name: "TV3 content" },
  { name: "TV3 screen", props: ["Transform"] },
  { name: "TV3 frame" },
  { name: "TV4 content" },
  { name: "TV4 screen", props: ["Transform", "Layer Styles"], keys: [[0, 3], [37.5, 4]] },
  { name: "TV4 frame" },
  { name: "phone content" },
  { name: "phone screen", open: true },
];

const rows = layers.flatMap((layer, i) => [
  { ...layer, number: i + 1, layer: true, open: layer.open || Boolean(layer.props) },
  ...(layer.props || []).map((name) => ({ name, keys: name === "Layer Styles" ? layer.keys : null })),
]);

const ticks = ["0:00s", "05s", "10s", "15s", "20s", "25s", "30s", "35s", "40s", "45s", "50s", "55s", "01:00s"];

const LayerRow = ({ row }) => (
  <Row $layer>
    <Cell $width={136} $pad={8} $gap={4}>
      <Slot><EyeIcon /></Slot>
      <Slot $empty />
      <Slot />
      <Slot />
    </Cell>
    <Cell $width={63} $pad={8} $gap={8}>
      <Twirl open={row.open} />
      <Swatch $size={24} $color={color.lavender} />
    </Cell>
    <Cell $width={66} $pad={12} $bold $text>{row.number}</Cell>
    <Cell $width={336} $pad={8} $gap={13} $bold $text>
      <AiIcon />
      {row.name}
    </Cell>
    <Cell $width={274} $pad={9} $gap={4}>
      <Slot><ShyIcon /></Slot>
      <Slot />
      <Slot>
        <Draw w={22} h={22}><path d="M1 21L21 1" {...stroked(color.icon, 2.5)} /></Draw>
      </Slot>
      <Slot $empty />
      <Slot $empty />
      <Slot />
      <Slot />
      <Slot />
    </Cell>
    <Cell $width={234} $pad={9} $gap={12}>
      <SpiralIcon />
      <Dropdown label={`Parent of ${row.name}`} value="None" width="178px" height={28} flat />
    </Cell>
  </Row>
);

const PropertyRow = ({ row }) => (
  <Row>
    <Cell $width={136} $pad={8}>{row.name === "Layer Styles" && <Slot><EyeIcon /></Slot>}</Cell>
    <Cell $width={465} $pad={42} $gap={16} $text>
      <Twirl />
      {row.name}
    </Cell>
    <Cell $pad={9}><Reset>Reset</Reset></Cell>
  </Row>
);

const Timeline = () => (
  <TimelinePanel>
    <TabStrip $height={50} $pad={52} $gap={0}>
      <Tab $width={250}>Render Queue</Tab>
      <Tab $width={384}>
        <Swatch $color={color.tan} />
        <CompName>welcome screen animation</CompName>
      </Tab>
      <Tab $on>
        <Close>×</Close>
        <Swatch $color={color.tan} />
        <CompName>welcome screen animation (old)</CompName>
        <Burger />
      </Tab>
    </TabStrip>
    <TimelineBody>
      <LayerPane>
        <LayerTools>
          <Clock>
            <ClockTime>0:00:07:26</ClockTime>
            <ClockFrames>00236 (30.00 fps)</ClockFrames>
          </Clock>
          <LayerSearch>
            <FindIcon menu />
            <SearchInput aria-label="Search layers" />
          </LayerSearch>
          <LayerToolIcons>
            <LayerTool $width={82} aria-label="Mini-flowchart">
              <Draw w={36} h={28}>
                <path d="M1 5h32M17 5v16h10M17 13h12" {...stroked()} />
                <path d="M2 2h7v6H2zM24 2h9v6h-9zM24 11h9v6h-9z M25 22h9l-4 5z" />
              </Draw>
            </LayerTool>
            <LayerTool aria-label="Hide shy layers">
              <Draw w={32} h={28}>
                <path d="M0 15h32v11H0z" fill="#6c6c6c" />
                <path fillRule="evenodd" d="M7 13V9Q8 1 16 1T25 9V13L30 15H2z M12 6a2 2 0 1 0 .1 0z M20 6a2 2 0 1 0 .1 0z M14 14h4v9h-4z" />
              </Draw>
            </LayerTool>
            <LayerTool aria-label="Frame blending"><FilmIcon w={32} h={30} /></LayerTool>
            <LayerTool aria-label="Motion blur"><BlurIcon w={30} h={30} /></LayerTool>
            <LayerTool $width={86} aria-label="Graph editor">
              <Draw w={36} h={32}>
                <path d="M6 6h27v23H6zM10 2v4M16 0v6M23 0v6M29 2v4M2 10h4M2 16h4M2 22h4M2 28h4M10 12Q17 12 20 19T29 24" {...stroked()} />
              </Draw>
            </LayerTool>
          </LayerToolIcons>
        </LayerTools>
        <LayerTable>
          <thead>
            <HeadRow>
              <HeadCell $width={138} $pad={8} $gap={4}>
                <Slot $empty><EyeIcon /></Slot>
                <Slot $empty><SpeakerIcon /></Slot>
                <Slot $empty><Draw w={14} h={14}><circle cx="7" cy="7" r="7" /></Draw></Slot>
                <Slot $empty><LockIcon /></Slot>
              </HeadCell>
              <HeadCell $width={62} $pad={14} $justify="center"><TagIcon /></HeadCell>
              <HeadCell $width={66} $pad={10}>#</HeadCell>
              <HeadCell $width={336} $pad={9}>Layer Name</HeadCell>
              <HeadCell $width={274} $pad={8} $gap={4}>
                <Slot $empty><ShyIcon /></Slot>
                <Slot $empty>
                  <Draw w={20} h={20}>
                    <circle cx="10" cy="10" r="3.5" {...stroked()} />
                    <path d="M10 0v5M10 15v5M0 10h5M15 10h5M3 3l3 3M14 14l3 3M17 3l-3 3M6 14l-3 3" {...stroked()} />
                  </Draw>
                </Slot>
                <Slot $empty>
                  <Draw w={20} h={20}><path d="M1 2L19 18" {...stroked(color.icon, 4)} strokeDasharray="4 2" /></Draw>
                </Slot>
                <Slot $empty><Fx>fx</Fx></Slot>
                <Slot $empty><FilmIcon w={26} h={26} /></Slot>
                <Slot $empty><BlurIcon /></Slot>
                <Slot $empty>
                  <Draw w={20} h={20}>
                    <circle cx="10" cy="10" r="9" {...stroked()} />
                    <path d="M17 3.5A9 9 0 0 0 3.5 17z" />
                  </Draw>
                </Slot>
                <Slot $empty>
                  <Draw w={20} h={20}>
                    <path d="M10 1l8 4v10l-8 4-8-4V5zM2 5l8 5 8-5M10 10v9" {...stroked()} />
                  </Draw>
                </Slot>
              </HeadCell>
              <HeadCell $width={234} $pad={10}>Parent &amp; Link</HeadCell>
            </HeadRow>
          </thead>
          <tbody>
            {rows.map((row, i) => (row.layer ? <LayerRow key={i} row={row} /> : <PropertyRow key={i} row={row} />))}
          </tbody>
        </LayerTable>
      </LayerPane>
      <TimePane>
        <Navigator $height={20}>
          <Handle />
          <Span $color="#666" />
          <Handle $end />
        </Navigator>
        <TimeArea>
          <Ruler>
            {ticks.map((t) => (
              <Tick key={t}>{t}</Tick>
            ))}
          </Ruler>
          <Navigator $height={34}>
            <Handle />
            <Span $color="#5f5f5f" />
            <Handle $end />
          </Navigator>
          <Cached />
          <Tracks>
            {rows.map((row, i) => (
              <Track key={i} $layer={row.layer}>
                {row.layer ? (
                  <LayerBar />
                ) : (
                  <PropertyBar>
                    <Beam />
                    {(row.keys || []).map(([at, count]) => (
                      <Keys key={at} style={{ left: `${at}%` }}>
                        {Array.from({ length: count }, (_, k) => (
                          <Key key={k} />
                        ))}
                      </Keys>
                    ))}
                  </PropertyBar>
                )}
              </Track>
            ))}
          </Tracks>
          <Playhead>
            <Draw w={22} h={28} c={color.blue}>
              <path fillRule="evenodd" d="M0 0h22v14L13 28H9L0 14z M8 12v2h2v12h2V14h2v-2z" />
            </Draw>
          </Playhead>
        </TimeArea>
      </TimePane>
      <MarkerPane>
        <MarkerTop $height={114} $line>
          <Draw w={22} h={28}><path d="M0 0h22v20L11 28L0 20z" /></Draw>
        </MarkerTop>
        <MarkerTop $height={33}>
          <Draw w={28} h={24}>
            <path d="M16 4h12v13H16z" />
            <path d="M1 14L15 1V9M1 14L9 15" {...stroked()} />
            <circle cx="13" cy="16" r="6" fill={color.panel} stroke={color.icon} strokeWidth="2" />
          </Draw>
        </MarkerTop>
        <VScroll><VThumb /></VScroll>
      </MarkerPane>
    </TimelineBody>
    <TimelineFoot>
      <FootIcons>
        <Draw w={32} h={26} c={color.blue}>
          <path d="M6 2h13v11H6zM10 7h13v11H10zM15 13h13v11H15z" fill="#1d2c3c" stroke={color.blue} strokeWidth="2" />
          <path d="M19 17h5v4h-5z" />
        </Draw>
        <Draw w={28} h={26}>
          <circle cx="10" cy="9" r="8" {...stroked()} />
          <path d="M11 10h12v12H11z" {...stroked()} />
        </Draw>
        <Draw w={28} h={24}>
          <path d="M8 0h12v24H8z" fill="#6c6c6c" />
          <path d="M8 0v6L4 12l4 6v6M20 0v6l4 6-4 6v6" {...stroked()} />
        </Draw>
        <Draw w={28} h={24}>
          <path d="M1 23L3 19A8.5 8.5 0 1 1 17 16L21 8V4h2v4l2 2L19 23z M25 2h2v6h-2z" />
        </Draw>
      </FootIcons>
      <RenderTime>
        Frame Render Time <Good>7ms</Good>
      </RenderTime>
      <ToggleButton>Toggle Switches / Modes</ToggleButton>
      <ZoomControl>
        <PeakIcon w={20} h={10} />
        <ZoomRange type="range" defaultValue="0" aria-label="Timeline zoom" />
        <PeakIcon w={34} h={16} />
      </ZoomControl>
    </TimelineFoot>
  </TimelinePanel>
);

export default function App() {
  return (
    <>
      <GlobalStyle />
      <Page>
        <Backdrop>
          <TitleBar>
            <Lights>
              <Light aria-label="Close" />
              <Light aria-label="Minimize" />
              <Light aria-label="Zoom window" />
            </Lights>
            <WindowTitle>
              Adobe After Effects 2022 - /Users/josh/Morpheus/Projects/Animations/Welcome Screen/welcome screen animation.aep
            </WindowTitle>
          </TitleBar>
        </Backdrop>
        <TopTools />
        <Upper>
          <ProjectPanel />
          <CompPanel />
          <RightColumn />
        </Upper>
        <Timeline />
      </Page>
    </>
  );
}
